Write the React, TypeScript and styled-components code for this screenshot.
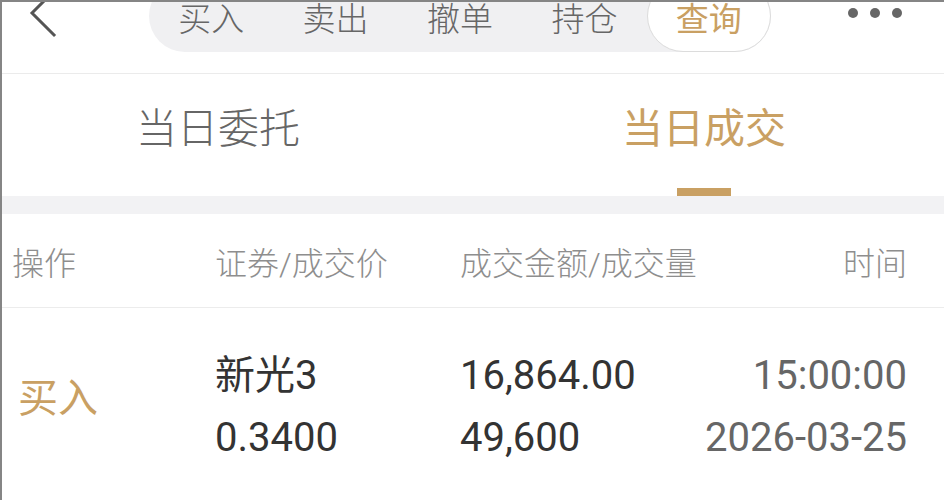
import * as React from "react";
import styled, { createGlobalStyle } from "styled-components";

const GOLD = "#c9a063";

const GlobalStyle = createGlobalStyle`
  html, body {
    margin: 0;
    padding: 0;
    background: #fff;
  }
  body {
    font-family: Roboto, "Noto Sans CJK SC", sans-serif;
    font-weight: 300;
  }
`;

const Screen = styled.div`
  position: relative;
  width: 944px;
  height: 500px;
  overflow: hidden;
  background: #fff;

  &::after {
    content: "";
    position: absolute;
    inset: 0;
    border-top: 2px solid #858585;
    border-left: 2px solid #858585;
    pointer-events: none;
  }
`;

const TopBar = styled.div`
  display: flex;
  align-items: center;
  height: 72px;
  margin-top: -20px;
`;

const BackButton = styled.div`
  width: 149px;
  height: 72px;
  display: flex;
  align-items: center;
  padding-left: 28px;
  box-sizing: border-box;
  color: #555;
`;

const Segmented = styled.div`
  display: flex;
  width: 622px;
  height: 72px;
  border-radius: 36px;
  background: #f0f0f2;
`;

const Segment = styled.div<{ $active?: boolean }>`
  flex: 1;
  display: flex;
  align-items: center;
  justify-content: center;
  font-size: 33px;
  color: ${({ $active }) => ($active ? GOLD : "#666")};
  font-weight: ${({ $active }) => ($active ? 400 : 300)};
  background: ${({ $active }) => ($active ? "#fff" : "transparent")};
  border: 1px solid ${({ $active }) => ($active ? "#dcdcdc" : "transparent")};
  border-radius: 36px;
  box-sizing: border-box;
  padding-top: 2px;
`;

const Dots = styled.div`
  margin-left: auto;
  margin-bottom: 6px;
  padding-right: 42px;
  display: flex;
  gap: 12px;
`;

const Dot = styled.span`
  width: 10px;
  height: 10px;
  border-radius: 50%;
  background: #666;
`;

const TopDivider = styled.div`
  height: 21px;
  border-bottom: 1px solid #ebebeb;
`;

const Tabs = styled.div`
  display: flex;
  gap: 322px;
  padding: 35px 0 0 136px;
  height: 122px;
  box-sizing: border-box;
`;

const Tab = styled.div<{ $active?: boolean }>`
  display: flex;
  flex-direction: column;
  align-items: center;
  font-size: 41px;
  line-height: 41px;
  color: ${({ $active }) => ($active ? GOLD : "#666")};
  font-weight: ${({ $active }) => ($active ? 400 : 300)};
`;

const Indicator = styled.div<{ $active?: boolean }>`
  width: 54px;
  height: 8px;
  margin-top: 38px;
  background: ${({ $active }) => ($active ? GOLD : "transparent")};
`;

const Band = styled.div`
  height: 18px;
  background: #f2f2f4;
`;

const Row = styled.div`
  display: grid;
  grid-template-columns: 203px 245px 1fr auto;
  padding: 0 37px 0 12px;
`;

const HeadRow = styled(Row)`
  height: 93px;
  align-items: center;
  border-bottom: 1px solid #ececec;
  font-size: 32px;
  color: #8e8e8e;
`;

const DataRow = styled(Row)`
  padding-top: 37px;
  font-size: 40px;
  line-height: 62px;
  color: #333;
  font-weight: 400;
`;

const OpCell = styled.div`
  color: ${GOLD};
  padding: 23px 0 0 6px;
`;

const Cell = styled.div<{ $right?: boolean; $muted?: boolean }>`
  display: flex;
  flex-direction: column;
  align-items: ${({ $right }) => ($right ? "flex-end" : "flex-start")};
  color: ${({ $muted }) => ($muted ? "#666" : "inherit")};
`;

const tabs = ["买入", "卖出", "撤单", "持仓", "查询"];

export default function App() {
  return (
    <Screen>
      <GlobalStyle />
      <TopBar>
        <BackButton>
          <svg width="30" height="48" viewBox="0 0 30 48" fill="none">
            <polyline
              points="26,-1 4,21 26,43"
              stroke="currentColor"
              strokeWidth="3"
              strokeLinecap="square"
            />
          </svg>
        </BackButton>
        <Segmented>
          {tabs.map((t) => (
            <Segment key={t} $active={t === "查询"}>
              {t}
            </Segment>
          ))}
        </Segmented>
        <Dots>
          <Dot />
          <Dot />
          <Dot />
        </Dots>
      </TopBar>
      <TopDivider />
      <Tabs>
        <Tab>
          当日委托
          <Indicator />
        </Tab>
        <Tab $active>
          当日成交
          <Indicator $active />
        </Tab>
      </Tabs>
      <Band />
      <HeadRow>
        <div>操作</div>
        <div>证券/成交价</div>
        <div>成交金额/成交量</div>
        <div>时间</div>
      </HeadRow>
      <DataRow>
        <OpCell>买入</OpCell>
        <Cell>
          <span>新光3</span>
          <span>0.3400</span>
        </Cell>
        <Cell>
          <span>16,864.00</span>
          <span>49,600</span>
        </Cell>
        <Cell $right $muted>
          <span>15:00:00</span>
          <span>2026-03-25</span>
        </Cell>
      </DataRow>
    </Screen>
  );
}
